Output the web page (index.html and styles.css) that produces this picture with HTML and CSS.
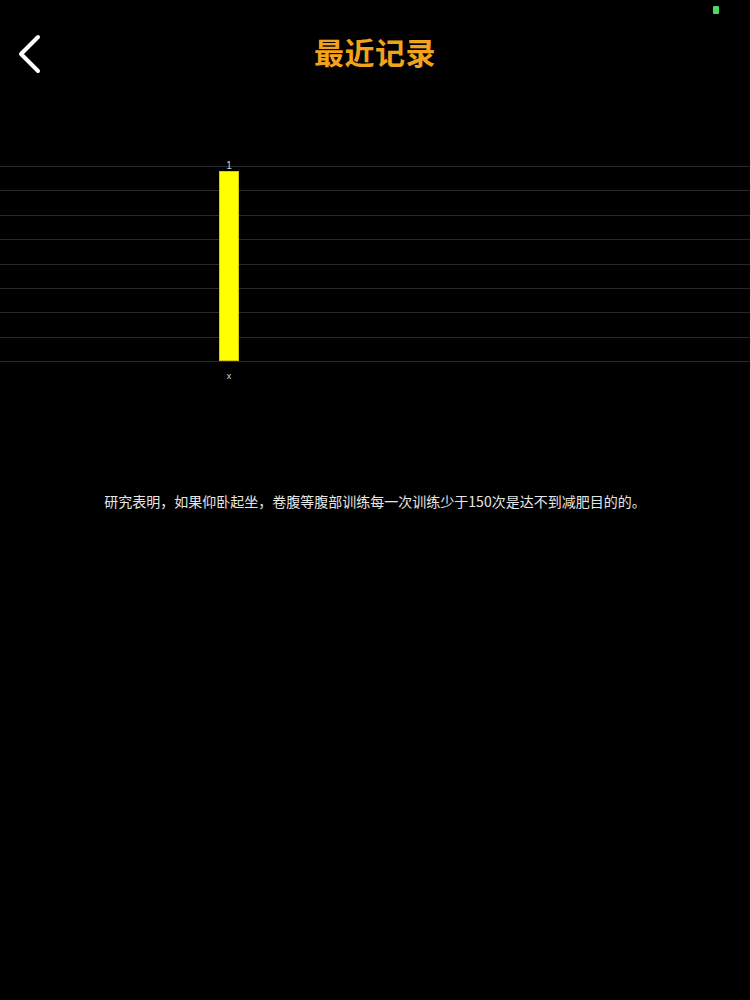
FILE: index.html
```html
<!DOCTYPE html>
<html lang="zh">
<head>
<meta charset="utf-8">
<title>最近记录</title>
<link rel="stylesheet" href="styles.css">
</head>
<body>
<div class="status"><span class="dot"></span></div>
<header class="nav">
  <a class="back" href="#">
    <svg width="26" height="40" viewBox="0 0 26 40"><polyline points="21,3 4,20 21,37" fill="none" stroke="#fff" stroke-width="4" stroke-linecap="round" stroke-linejoin="round"/></svg>
  </a>
  <h1 class="title">最近记录</h1>
</header>
<section class="chart">
  <div class="grid">
    <div class="line"></div><div class="line"></div><div class="line"></div>
    <div class="line"></div><div class="line"></div><div class="line"></div>
    <div class="line"></div><div class="line"></div><div class="line"></div>
  </div>
  <div class="bar-col">
    <span class="val">1</span>
    <div class="bar"></div>
    <span class="xlab">x</span>
  </div>
</section>
<p class="note">研究表明，如果仰卧起坐，卷腹等腹部训练每一次训练少于150次是达不到减肥目的的。</p>
</body>
</html>
```
FILE: styles.css
```css
html, body {
  margin: 0;
  padding: 0;
  background: #000;
  height: 100%;
}
body {
  font-family: "Noto Sans CJK SC", "Liberation Sans", sans-serif;
  color: #fff;
}
.status {
  height: 0;
  position: relative;
}
.dot {
  position: absolute;
  left: 713px;
  top: 6px;
  width: 6px;
  height: 8px;
  background: #4cd964;
  border-radius: 1px;
}
.nav {
  height: 100px;
  display: flex;
  align-items: center;
  justify-content: center;
  position: relative;
  padding-top: 8px;
  box-sizing: border-box;
}
.back {
  position: absolute;
  left: 17px;
  top: 34px;
  display: block;
  line-height: 0;
}
.title {
  margin: 0;
  margin-top: -6px;
  font-size: 30px;
  font-weight: 700;
  color: #f2a31c;
  letter-spacing: 0.5px;
}
.chart {
  position: relative;
  margin-top: 66px;
  height: 196px;
}
.grid {
  display: flex;
  flex-direction: column;
  justify-content: space-between;
  height: 196px;
}
.line {
  height: 1px;
  background: #2a2a2e;
}
.bar-col {
  position: absolute;
  left: 219px;
  top: -5px;
  width: 20px;
  display: flex;
  flex-direction: column;
  align-items: center;
}
.val {
  font-family: "Liberation Sans", sans-serif;
  font-size: 10px;
  line-height: 10px;
  height: 10px;
  color: #ccc;
}
.bar {
  width: 20px;
  height: 190px;
  box-sizing: border-box;
  background: #ffff00;
  border: 1px solid #d8c800;
}
.xlab {
  font-family: "Liberation Sans", sans-serif;
  font-size: 9px;
  line-height: 12px;
  margin-top: 9px;
  color: #ddd;
}
.note {
  margin: 129px 0 0;
  text-align: center;
  font-size: 14px;
  line-height: 20px;
  color: #e6e6e6;
}
```
